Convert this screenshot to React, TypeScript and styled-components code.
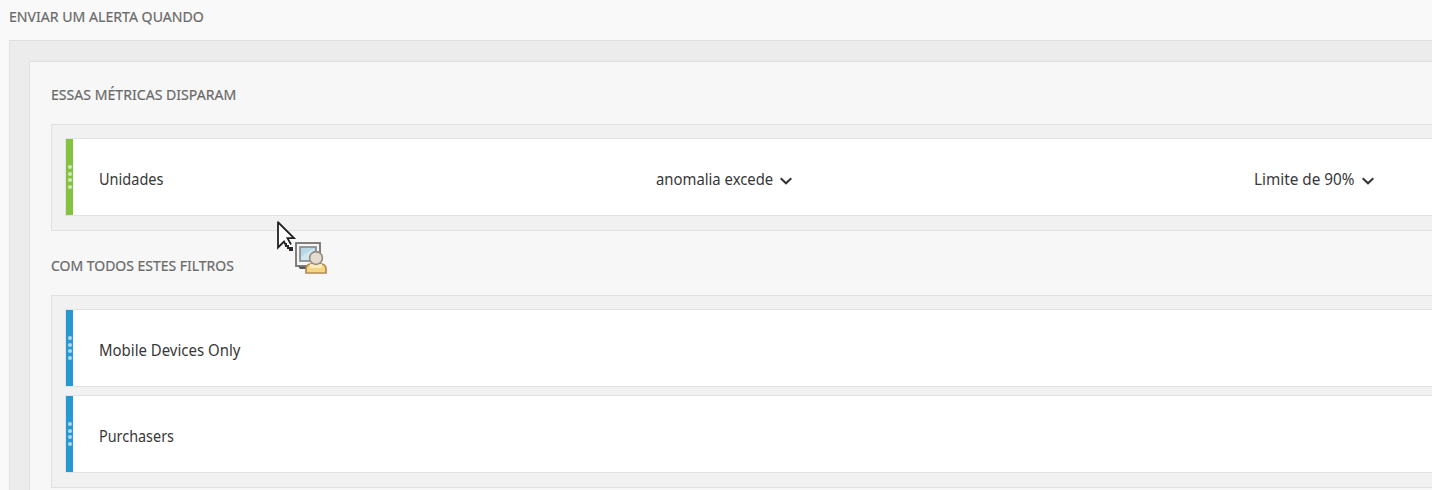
import React from 'react';
import styled, { createGlobalStyle } from 'styled-components';

const GlobalStyle = createGlobalStyle`
  * { box-sizing: border-box; }
  body {
    margin: 0;
    background: #f9f9f9;
    font-family: 'Noto Sans', 'Open Sans', sans-serif;
    overflow: hidden;
  }
`;

const Page = styled.main`
  position: relative;
  height: 490px;
  padding-left: 9px;
  overflow: hidden;
  display: flex;
  flex-direction: column;
`;

const Heading = styled.h2<{ $scale: number }>`
  margin: 0;
  height: 20px;
  flex: none;
  font-size: 14.5px;
  line-height: 20px;
  font-weight: 400;
  color: #6a6a6a;
  -webkit-text-stroke: 0.2px #6a6a6a;
  white-space: nowrap;
  transform: scaleX(${(p) => p.$scale});
  transform-origin: left center;
`;

const PageHeader = styled.header`
  height: 40px;
  flex: none;
  padding-top: 6px;
`;

const Outer = styled.section`
  flex: 1;
  padding: 20px 0 0 19px;
  border: 1px solid #e0e0e0;
  border-width: 1px 0 0 1px;
  background: #ececec;
`;

const Inner = styled.div`
  height: 600px;
  padding: 22px 0 0 21px;
  border: 1px solid #e0e0e0;
  border-width: 1px 0 0 1px;
  background: #f7f7f7;
`;

const Group = styled.section`
  margin-bottom: 24px;
`;

const DropArea = styled.div`
  display: flex;
  flex-direction: column;
  gap: 8px;
  margin-top: 20px;
  padding: 13px 0 14px 13px;
  border: 1px solid #e0e0e0;
  border-right: 0;
  background: #f1f1f1;
`;

const Row = styled.div`
  display: grid;
  grid-template-columns: 7px 583px 598px 1fr;
  height: 78px;
  border: 1px solid #e2e2e2;
  border-right: 0;
  background: #fff;
`;

const Handle = styled.div<{ $color: string }>`
  display: flex;
  flex-direction: column;
  align-items: center;
  gap: 2.5px;
  padding-top: 26px;
  background: ${(p) => p.$color};
`;

const Dot = styled.i`
  width: 4px;
  height: 4px;
  border-radius: 50%;
  background: rgba(255, 255, 255, 0.62);
`;

const Cell = styled.div<{ $indent?: number }>`
  display: flex;
  align-items: center;
  padding-left: ${(p) => p.$indent ?? 0}px;
  padding-top: 3px;
`;

const Label = styled.span<{ $width: number; $scale: number }>`
  width: ${(p) => p.$width}px;
  font-size: 16.5px;
  line-height: 24px;
  color: #383838;
  white-space: nowrap;
  transform: scaleX(${(p) => p.$scale});
  transform-origin: left center;
`;

const ChevronIcon = styled.svg`
  width: 12px;
  height: 8px;
  margin: 5px 0 0 7px;
  fill: none;
  stroke: #333;
  stroke-width: 2;
`;

const DragCursor = styled.svg`
  position: absolute;
  left: 275px;
  top: 219px;
  width: 56px;
  height: 58px;
`;

const Chevron = () => (
  <ChevronIcon viewBox="0 0 12 8">
    <path d="M0.7 1.2 6 6.3 11.3 1.2" />
  </ChevronIcon>
);

const Grip = ({ color }: { color: string }) => (
  <Handle $color={color}>
    <Dot /><Dot /><Dot /><Dot />
  </Handle>
);

const FilterRow = ({ name, width, scale }: { name: string; width: number; scale: number }) => (
  <Row>
    <Grip color="#2699d3" />
    <Cell $indent={26}><Label $width={width} $scale={scale}>{name}</Label></Cell>
  </Row>
);

export default function App() {
  return (
    <>
      <GlobalStyle />
      <Page>
        <PageHeader><Heading $scale={0.973}>ENVIAR UM ALERTA QUANDO</Heading></PageHeader>
        <Outer>
          <Inner>
            <Group>
              <Heading $scale={0.972}>ESSAS MÉTRICAS DISPARAM</Heading>
              <DropArea>
                <Row>
                  <Grip color="#83c341" />
                  <Cell $indent={26}><Label $width={65} $scale={0.88}>Unidades</Label></Cell>
                  <Cell><Label $width={117} $scale={0.9}>anomalia excede</Label><Chevron /></Cell>
                  <Cell><Label $width={101} $scale={0.927}>Limite de 90%</Label><Chevron /></Cell>
                </Row>
              </DropArea>
            </Group>
            <Group>
              <Heading $scale={0.963}>COM TODOS ESTES FILTROS</Heading>
              <DropArea>
                <FilterRow name="Mobile Devices Only" width={142} scale={0.906} />
                <FilterRow name="Purchasers" width={76} scale={0.872} />
              </DropArea>
            </Group>
          </Inner>
        </Outer>
        <DragCursor viewBox="0 0 56 58">
          <path d="M3 3.5V27.5L8.5 22.5H10.5L15.5 31H18.5V28L14.5 20.5H19.5Z" fill="#fff" />
          <path d="M3 2.5V28.5L9 22.5L11.5 27.5M2.8 3L19 19.2H12.5L16 25.5" fill="none" stroke="#222" strokeWidth="1.8" />
          <path d="M10 24h2v4h-2zM12 26h2v4h-2zM14 28h4v4h-4z" fill="#292929" />
          <path d="M23 47h14v3H25z" fill="#555" />
          <rect x="21" y="24" width="24" height="23" fill="#f7f5f2" stroke="#747270" strokeWidth="1.8" />
          <rect x="25" y="28" width="16" height="14" fill="#b9d8e7" stroke="#858c90" strokeWidth="1.7" />
          <path d="M26 38 39 29v12H26z" fill="#d2e6ed" />
          <path d="M31 54V50q0-4 4-5h12q4 1 4 5v4z" fill="#f7d482" stroke="#b28a58" strokeWidth="1.7" />
          <path d="M35 45h12v4H35z" fill="#faebbd" />
          <circle cx="41" cy="39" r="6.4" fill="#e4ddcf" stroke="#938b82" strokeWidth="1.6" />
        </DragCursor>
      </Page>
    </>
  );
}
